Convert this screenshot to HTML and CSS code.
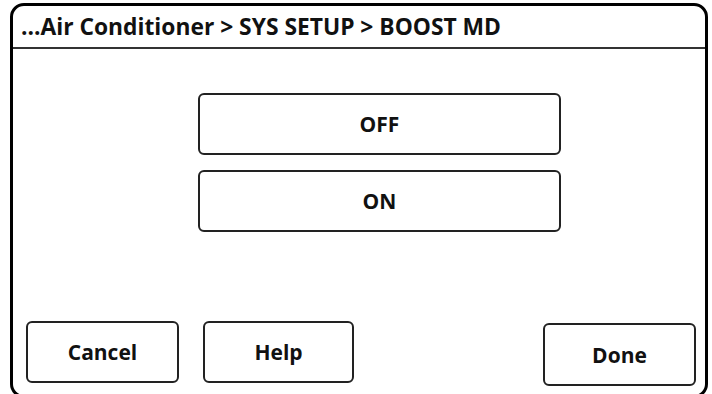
FILE: index.html
```html
<!DOCTYPE html>
<html>

<head>
	<link rel="stylesheet" href="styles.css">
</head>

<body>
	<div class="frame">
		<div class="title-bar">...Air Conditioner &gt; SYS SETUP &gt; BOOST MD</div>

		<div class="options">
			<div class="option">OFF</div>
			<div class="option">ON</div>
		</div>

		<div class="actions">
			<div class="btn btn-cancel">Cancel</div>
			<div class="btn btn-help">Help</div>
			<div class="btn btn-done">Done</div>
		</div>
	</div>
</body>

</html>
```

FILE: styles.css
```css
html,
body {
	margin: 0;
	padding: 0;
	overflow: hidden;
	background: #fff;
}

body {
	width: 712px;
	height: 394px;
	font-family: "Open Sans", "Liberation Sans", sans-serif;
	font-weight: 700;
	color: #111;
}

.frame {
	box-sizing: border-box;
	margin: 3px 0 0 10px;
	width: 698px;
	height: 395px;
	border: 3px solid #000;
	border-radius: 14px;
	display: flex;
	flex-direction: column;
}

.title-bar {
	box-sizing: border-box;
	height: 43px;
	padding: 6px 0 0 8px;
	border-bottom: 2px solid #333;
	font-size: 22.8px;
	line-height: 30px;
}

.options {
	display: flex;
	flex-direction: column;
	gap: 15px;
	padding: 44px 0 0 185px;
}

.option,
.btn {
	box-sizing: border-box;
	display: flex;
	justify-content: center;
	align-items: center;
	border: 2px solid #222;
	border-radius: 6px;
	font-size: 21px;
}

.option {
	width: 363px;
	height: 62px;
}

.actions {
	display: flex;
	align-items: flex-start;
	padding: 89px 0 0 13px;
}

.btn {
	width: 153px;
	height: 62px;
}

.btn-help {
	width: 151px;
	margin-left: 24px;
}

.btn-done {
	height: 63px;
	margin: 2px 0 0 189px;
}
```
